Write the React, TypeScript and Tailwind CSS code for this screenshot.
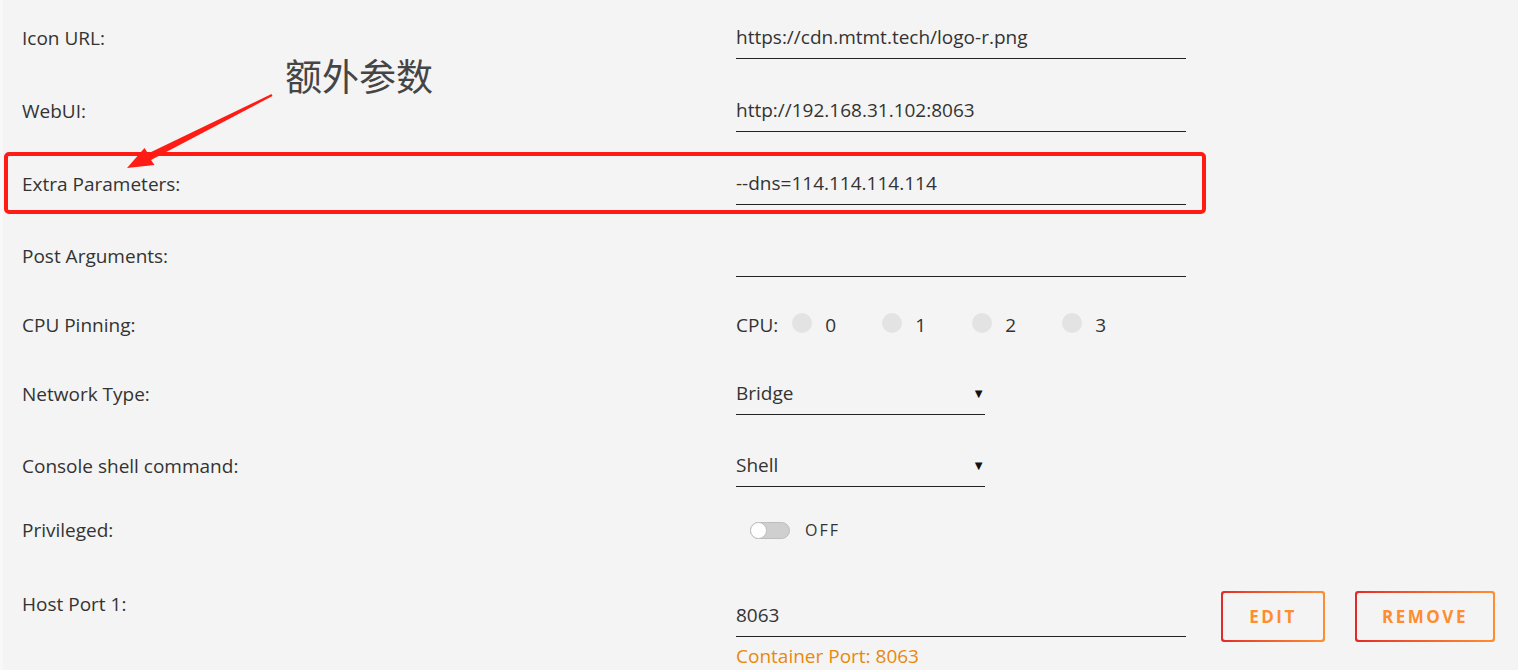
import React from 'react';

const font = "font-['Open_Sans','Noto_Sans',sans-serif]";

function TextRow({ label, value, className = '' }: { label: string; value: string; className?: string }) {
  return (
    <div className={`flex items-center ${className}`}>
      <div className="w-[714px] text-[19px] text-[#333] mb-[2px]">{label}</div>
      <div className="w-[450px] h-[40px] flex items-center pb-[2px] border-b border-[#222] text-[19px] text-[#333]">
        {value}
      </div>
    </div>
  );
}

function SelectRow({ label, value, className = '' }: { label: string; value: string; className?: string }) {
  return (
    <div className={`flex items-center ${className}`}>
      <div className="w-[714px] text-[19px] text-[#333] mb-[2px]">{label}</div>
      <div className="w-[249px] h-[40px] flex items-center justify-between pb-[2px] border-b border-[#222] text-[19px] text-[#333]">
        <span>{value}</span>
        <span className="text-[13px] text-[#111]">▼</span>
      </div>
    </div>
  );
}

function GradientButton({ children, width }: { children: React.ReactNode; width: string }) {
  return (
    <div className={`p-[2px] rounded-[3px] bg-gradient-to-r from-[#e22828] to-[#ff8d30] ${width}`}>
      <div className="h-[47px] rounded-[2px] bg-[#f4f4f4] flex items-center justify-center text-[17px] font-bold tracking-[2.5px] text-[#ff8c2f]">
        {children}
      </div>
    </div>
  );
}

export default function App() {
  return (
    <div className={`relative w-[1518px] h-[670px] overflow-hidden bg-[#f4f4f4] ${font}`}>
      <div className="absolute left-0 top-0 h-full w-[3px] bg-[#f8f8f8]" />

      <div className="pl-[22px] pt-[19px]">
        <TextRow label="Icon URL:" value="https://cdn.mtmt.tech/logo-r.png" />
        <TextRow label="WebUI:" value="http://192.168.31.102:8063" className="mt-[33px]" />
        <TextRow label="Extra Parameters:" value="--dns=114.114.114.114" className="mt-[33px]" />
        <TextRow label="Post Arguments:" value="" className="mt-[32px]" />

        {/* CPU pinning */}
        <div className="flex items-center mt-[28px] h-[40px]">
          <div className="w-[714px] text-[19px] text-[#333]">CPU Pinning:</div>
          <div className="flex items-center text-[19px] text-[#333]">
            <span className="mr-[14px]">CPU:</span>
            {[0, 1, 2, 3].map((n) => (
              <div key={n} className="flex items-center w-[90px]">
                <span className="w-[20px] h-[20px] rounded-full bg-[#e3e3e3] -mt-[5px]" />
                <span className="ml-[13px]">{n}</span>
              </div>
            ))}
          </div>
        </div>

        <SelectRow label="Network Type:" value="Bridge" className="mt-[30px]" />
        <SelectRow label="Console shell command:" value="Shell" className="mt-[32px]" />

        {/* Privileged */}
        <div className="flex items-center mt-[23px] h-[40px]">
          <div className="w-[714px] text-[19px] text-[#333]">Privileged:</div>
          <div className="flex items-center">
            <div className="relative ml-[14px] w-[40px] h-[17px] rounded-full bg-[#cfcfcf] border border-[#bdbdbd]">
              <span className="absolute -left-[1px] -top-[1px] w-[17px] h-[17px] rounded-full bg-white border border-[#bdbdbd]" />
            </div>
            <span className="ml-[15px] text-[16px] tracking-[2px] text-[#333]">OFF</span>
          </div>
        </div>

        {/* Host port */}
        <div className="flex items-start mt-[40px]">
          <div className="w-[714px] text-[19px] text-[#333]">Host Port 1:</div>
          <div className="flex flex-col pt-[7px]">
            <div className="w-[450px] h-[40px] flex items-center pb-[3px] border-b border-[#222] text-[19px] text-[#333]">8063</div>
            <div className="mt-[5px] text-[19px] text-[#e8890c]">Container Port: 8063</div>
          </div>
          <div className="flex gap-[30px] ml-[35px] pt-[1px]">
            <GradientButton width="w-[104px]">EDIT</GradientButton>
            <GradientButton width="w-[140px]">REMOVE</GradientButton>
          </div>
        </div>
      </div>

      {/* annotation */}
      <div className="absolute left-[4px] top-[152px] w-[1202px] h-[62px] border-[4px] border-[#ff1c14] rounded-[5px]" />
      <div className="absolute left-[285px] top-[50px] text-[37px] leading-[50px] text-[#454545] font-['Noto_Sans_CJK_SC',sans-serif]">
        额外参数
      </div>
      <svg className="absolute left-0 top-0" width="300" height="200" viewBox="0 0 300 200">
        <polygon
          points="271.5,94 148,153.5 144.5,148 127,168 154.5,165 151,160 272.5,96"
          fill="#ff1c14"
        />
      </svg>
    </div>
  );
}
